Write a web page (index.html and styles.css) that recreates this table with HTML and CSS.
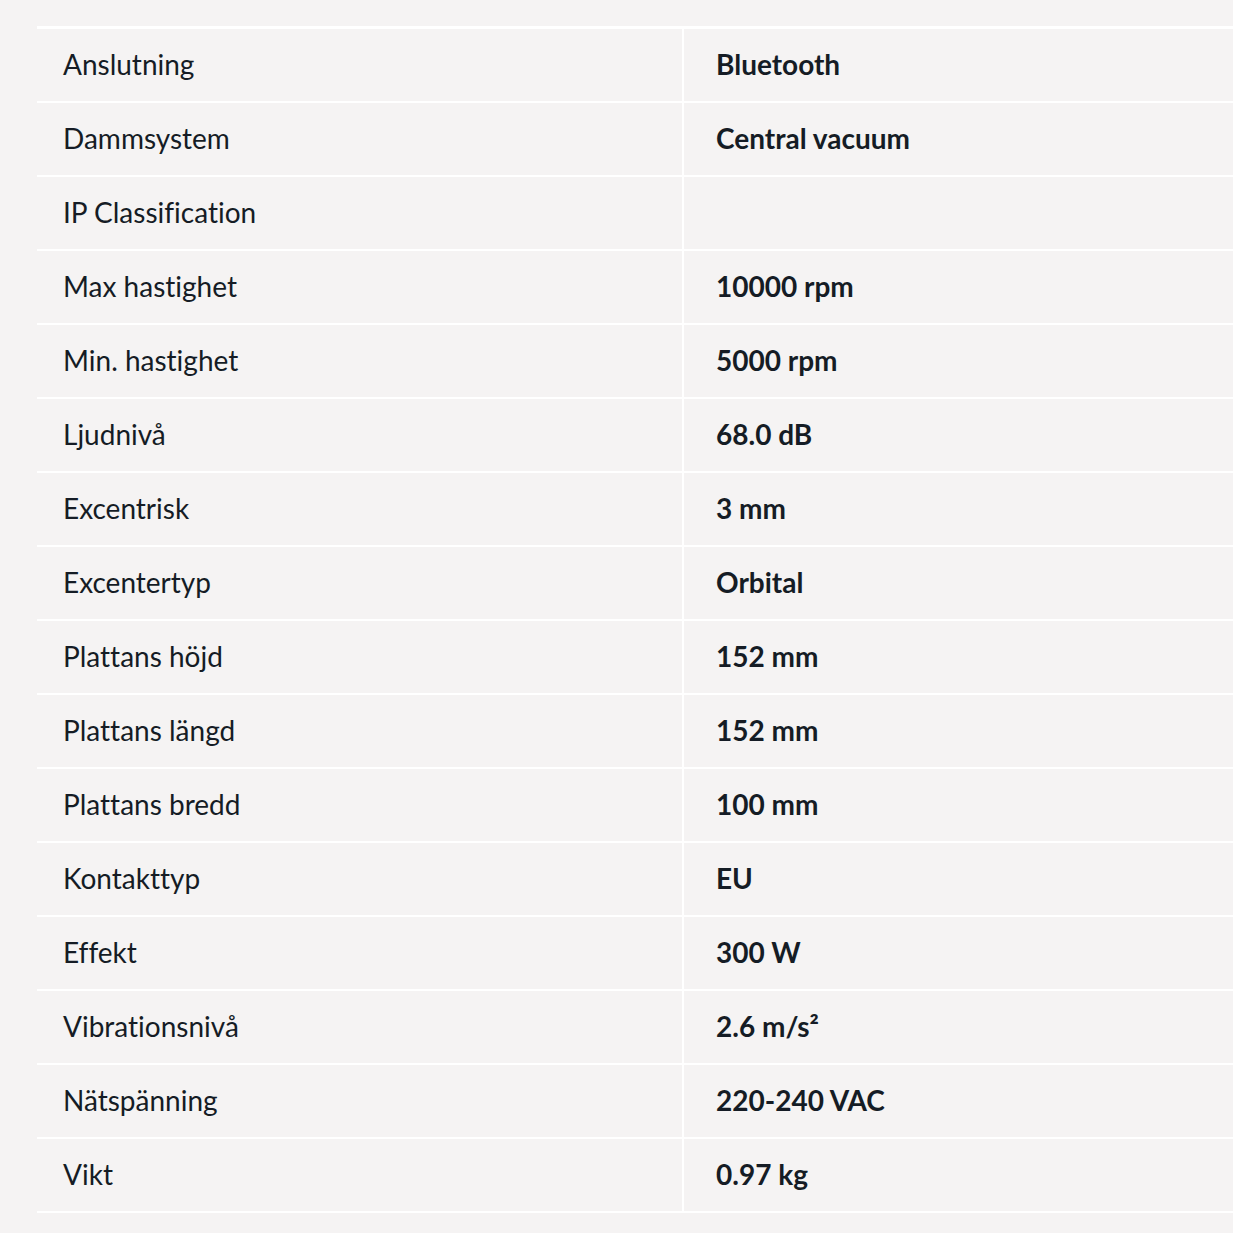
FILE: index.html
```html
<!DOCTYPE html>
<html lang="sv">
<head>
<meta charset="utf-8">
<title>Specifikationer</title>
<link rel="stylesheet" href="styles.css">
</head>
<body>
<div class="specs">
  <div class="row"><div class="label">Anslutning</div><div class="value">Bluetooth</div></div>
  <div class="row"><div class="label">Dammsystem</div><div class="value">Central vacuum</div></div>
  <div class="row"><div class="label">IP Classification</div><div class="value"></div></div>
  <div class="row"><div class="label">Max hastighet</div><div class="value">10000 rpm</div></div>
  <div class="row"><div class="label">Min. hastighet</div><div class="value">5000 rpm</div></div>
  <div class="row"><div class="label">Ljudnivå</div><div class="value">68.0 dB</div></div>
  <div class="row"><div class="label">Excentrisk</div><div class="value">3 mm</div></div>
  <div class="row"><div class="label">Excentertyp</div><div class="value">Orbital</div></div>
  <div class="row"><div class="label">Plattans höjd</div><div class="value">152 mm</div></div>
  <div class="row"><div class="label">Plattans längd</div><div class="value">152 mm</div></div>
  <div class="row"><div class="label">Plattans bredd</div><div class="value">100 mm</div></div>
  <div class="row"><div class="label">Kontakttyp</div><div class="value">EU</div></div>
  <div class="row"><div class="label">Effekt</div><div class="value">300 W</div></div>
  <div class="row"><div class="label">Vibrationsnivå</div><div class="value">2.6 m/s²</div></div>
  <div class="row"><div class="label">Nätspänning</div><div class="value">220-240 VAC</div></div>
  <div class="row"><div class="label">Vikt</div><div class="value">0.97 kg</div></div>
</div>
</body>
</html>
```

FILE: styles.css
```css
html, body {
  margin: 0;
  padding: 0;
  background: #f5f3f3;
}
body {
  font-family: Lato, "Open Sans", sans-serif;
  color: #151c25;
  overflow: hidden;
}
.specs {
  margin: 26px 0 0 37px;
  border-top: 3px solid #ffffff;
}
.row {
  display: grid;
  grid-template-columns: 647px 1fr;
  height: 74px;
  box-sizing: border-box;
  border-bottom: 2px solid #ffffff;
}
.label,
.value {
  display: flex;
  align-items: center;
  font-size: 28px;
  line-height: 1;
  padding-bottom: 3px;
  font-variant-ligatures: no-common-ligatures;
}
.label {
  padding-left: 26px;
  border-right: 2px solid #ffffff;
}
.value {
  padding-left: 32px;
  font-weight: 700;
}
```
